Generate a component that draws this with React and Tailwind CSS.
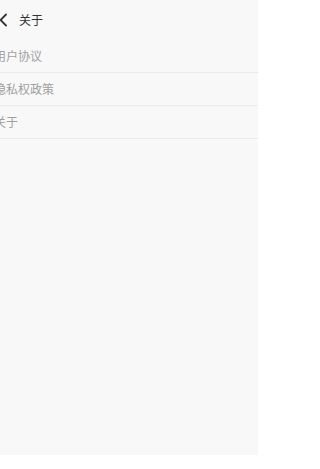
const ROWS = ['用户协议', '隐私权政策', '关于']

export default function App() {
  return (
    <div className="w-[258px] h-[469px] bg-white overflow-hidden">
      <div className="h-[455px] bg-[#f8f8f8] font-['Noto_Sans_CJK_SC',sans-serif]">
        {/* Header */}
        <div className="h-[40px] flex items-center">
          <svg width="9" height="14" viewBox="0 0 9 14" className="ml-[-1px]">
            <path d="M7 1.5 L1.5 7 L7 12.5" fill="none" stroke="#333" strokeWidth="1.8" strokeLinecap="round" strokeLinejoin="round" />
          </svg>
          <span className="ml-[11px] text-[12px] text-[#333] leading-none">关于</span>
        </div>

        {/* List */}
        <div className="flex flex-col">
          {ROWS.map((label) => (
            <div key={label} className="h-[33px] flex items-center border-b border-[#ebebeb]">
              <span className="ml-[-6px] text-[12px] text-[#a0a0a0] leading-none">{label}</span>
            </div>
          ))}
        </div>
      </div>
    </div>
  )
}
